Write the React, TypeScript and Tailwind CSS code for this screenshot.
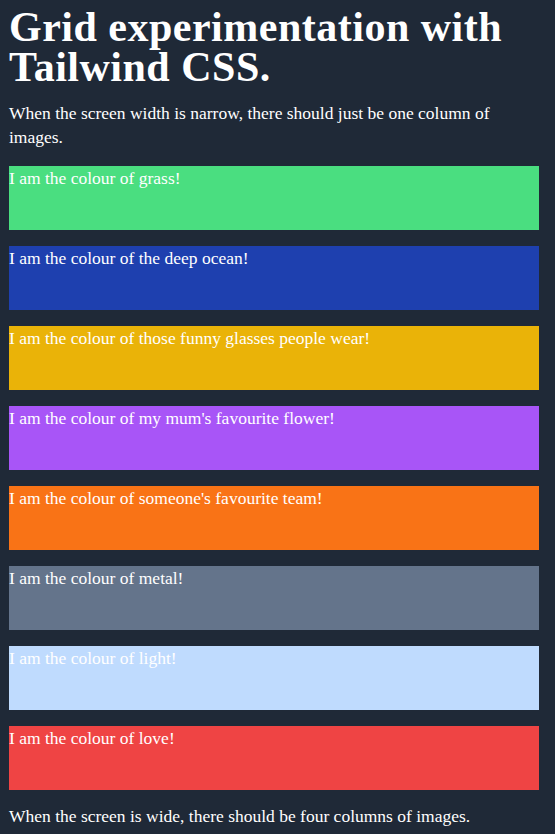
const swatches = [
  { bg: 'bg-[#4ade80]', label: 'I am the colour of grass!' },
  { bg: 'bg-[#1e40af]', label: 'I am the colour of the deep ocean!' },
  { bg: 'bg-[#eab308]', label: 'I am the colour of those funny glasses people wear!' },
  { bg: 'bg-[#a855f7]', label: "I am the colour of my mum's favourite flower!" },
  { bg: 'bg-[#f97316]', label: "I am the colour of someone's favourite team!" },
  { bg: 'bg-[#64748b]', label: 'I am the colour of metal!' },
  { bg: 'bg-[#bfdbfe]', label: 'I am the colour of light!' },
  { bg: 'bg-[#ef4444]', label: 'I am the colour of love!' },
];

export default function App() {
  return (
    <div className="min-h-screen bg-[#1f2937] pl-[9px] pr-4 pt-[7px] pb-4 text-white text-[17.5px] leading-6 font-['Liberation_Serif',serif]">
      <h1 className="text-[42px] leading-10 font-bold tracking-[0.5px]">
        Grid experimentation with Tailwind CSS.
      </h1>
      <p className="mt-[14px]">
        When the screen width is narrow, there should just be one column of images.
      </p>
      <div className="mt-[17px] grid grid-cols-1 gap-4 lg:grid-cols-4">
        {swatches.map((s) => (
          <div key={s.label} className={`h-16 ${s.bg}`}>
            {s.label}
          </div>
        ))}
      </div>
      <p className="mt-[14px]">
        When the screen is wide, there should be four columns of images.
      </p>
    </div>
  );
}
